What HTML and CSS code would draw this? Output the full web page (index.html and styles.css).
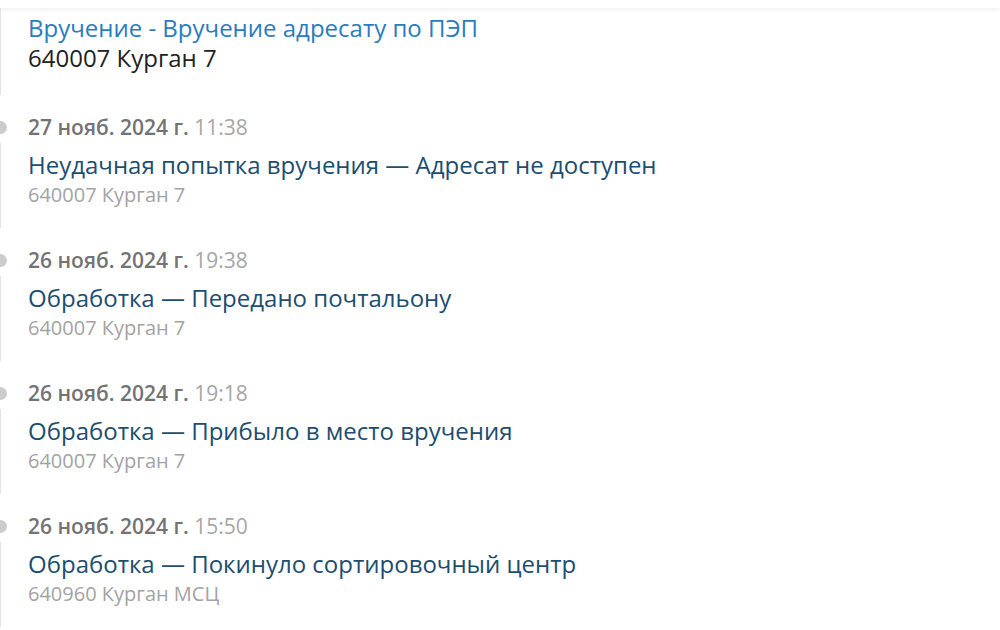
FILE: index.html
```html
<!DOCTYPE html>
<html lang="ru">
<head>
<meta charset="utf-8">
<link rel="stylesheet" href="styles.css">
</head>
<body>
<div class="topbar"></div>
<div class="timeline">
  <div class="body first">
    <div class="op-link">Вручение - Вручение адресату по ПЭП</div>
    <div class="place-dark">640007 Курган 7</div>
  </div>

  <div class="date"><span class="day">27 нояб. 2024 г.</span> <span class="time">11:38</span></div>
  <div class="body">
    <div class="op">Неудачная попытка вручения — Адресат не доступен</div>
    <div class="place">640007 Курган 7</div>
  </div>

  <div class="date"><span class="day">26 нояб. 2024 г.</span> <span class="time">19:38</span></div>
  <div class="body">
    <div class="op">Обработка — Передано почтальону</div>
    <div class="place">640007 Курган 7</div>
  </div>

  <div class="date"><span class="day">26 нояб. 2024 г.</span> <span class="time">19:18</span></div>
  <div class="body">
    <div class="op">Обработка — Прибыло в место вручения</div>
    <div class="place">640007 Курган 7</div>
  </div>

  <div class="date"><span class="day">26 нояб. 2024 г.</span> <span class="time">15:50</span></div>
  <div class="body">
    <div class="op">Обработка — Покинуло сортировочный центр</div>
    <div class="place">640960 Курган МСЦ</div>
  </div>
</div>
</body>
</html>
```

FILE: styles.css
```css
html, body {
  margin: 0;
  padding: 0;
  background: #ffffff;
  font-family: "Open Sans", "Noto Sans", sans-serif;
  overflow: hidden;
}
.topbar {
  height: 8px;
  background: #ffffff;
  box-shadow: 0 2px 4px rgba(0, 40, 60, 0.07);
  position: relative;
  z-index: 1;
}
.timeline {
  display: flex;
  flex-direction: column;
}
.body {
  border-left: 1px solid #e4e4e4;
  padding: 7px 0 18px 27px;
}
.body.first {
  padding: 5px 0 22px 27px;
}
.first .op-link, .first .place-dark {
  font-size: 24px;
  line-height: 30px;
}
.op-link { color: #2b7bbf; }
.place-dark { color: #222222; }
.op {
  font-size: 24px;
  line-height: 30px;
  color: #1c4e70;
}
.place {
  font-size: 20px;
  line-height: 30px;
  color: #a3a3a3;
}
.date {
  position: relative;
  padding: 20px 0 4px 28px;
  font-size: 21px;
  line-height: 24px;
}
.date::before {
  content: "";
  position: absolute;
  left: -6px;
  top: 26px;
  width: 13px;
  height: 13px;
  border-radius: 50%;
  background: #cccccc;
}
.day {
  color: #737373;
  font-weight: 600;
}
.time {
  color: #a6a6a6;
}
```
